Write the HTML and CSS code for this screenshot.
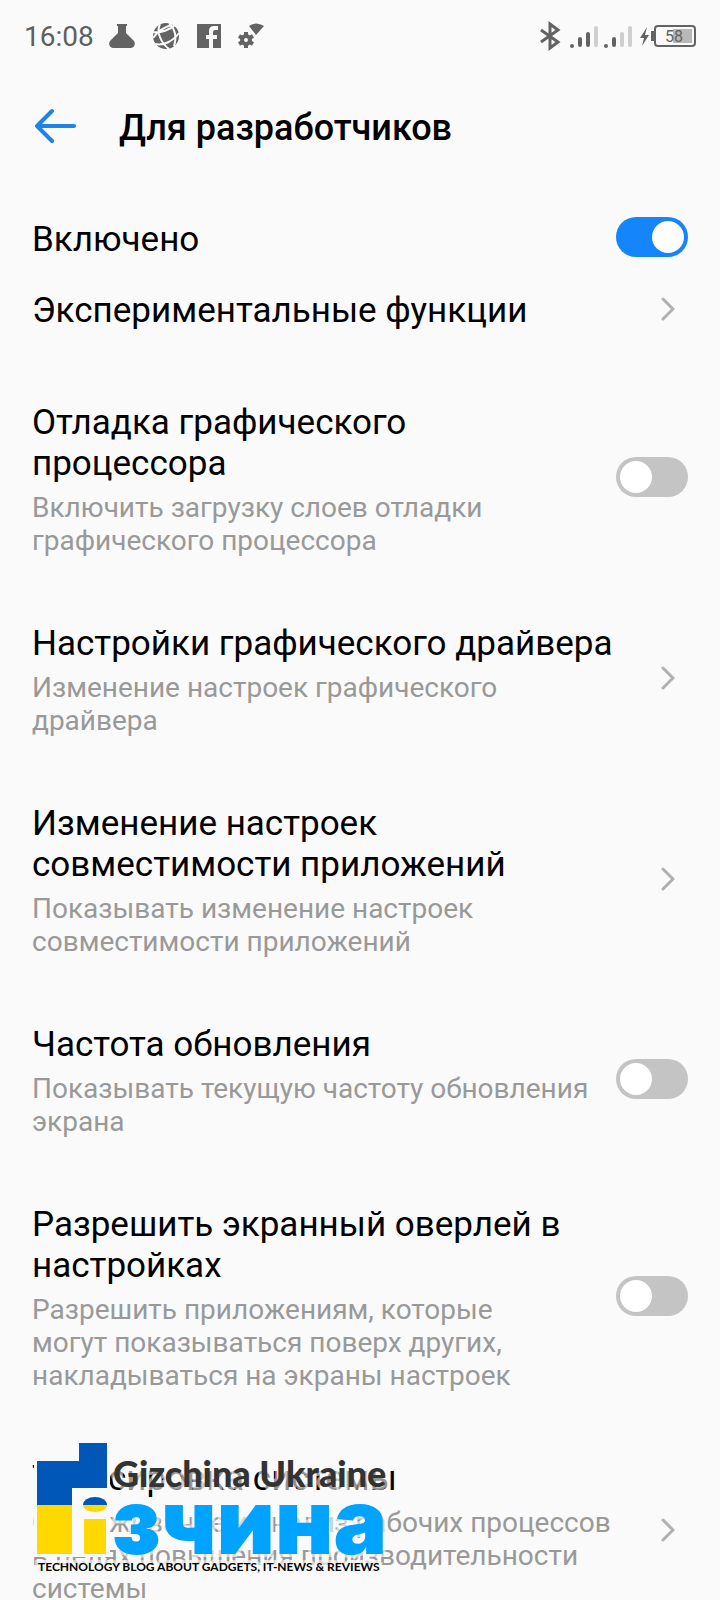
FILE: index.html
```
<!DOCTYPE html>
<html lang="ru">
<head>
  <meta charset="UTF-8">
  <meta name="viewport" content="width=device-width, initial-scale=1.0">
  <title>Для разработчиков</title>
  <link rel="stylesheet" href="styles.css">
</head>
<body>
  <div class="status-bar">
    <span class="clock">16:08</span>
    <div class="notifications">
      <svg class="icon" width="26" height="28" viewBox="0 0 26 28"><path d="M8 2h10v2h-1v7l8 8c2 3 0 7-3 7H4c-3 0-5-4-3-7l8-8V4H8z"/></svg>
      <svg class="icon" width="28" height="28" viewBox="0 0 28 28"><circle cx="14" cy="14" r="13"/><path class="cut" d="M1 10c8 1 17-2 22-7M3 22c9 2 18-3 24-11M8 2c-4 8 1 19 9 25M17 1c6 6 8 14 5 23M1 16C6 9 12 5 20 3"/></svg>
      <svg class="icon" width="24" height="28" viewBox="0 0 24 28"><path d="M0 2h24v24H16v-9h4v-4h-4v-3q0-2 2-2h3V4h-4q-5 0-5 5v4H9v4h3v9H0z"/></svg>
      <svg class="icon" width="26" height="28" viewBox="0 0 26 28"><path d="M11 4q7-5 15 0l-8 9z"/><path class="teeth" d="M8 10v16M1 14l14 8M1 22l14-8"/><circle class="gear" cx="8" cy="18" r="4"/></svg>
    </div>
    <div class="system">
      <svg class="icon" width="20" height="28" viewBox="0 0 20 28"><path class="line" d="M1 8l17 12-8 6V2l8 6L1 20"/></svg>
      <svg class="icon" width="64" height="28" viewBox="0 0 64 28"><path class="bar" d="M4 24v0M12 23v-6M20 23V12M38 24v0M46 23v-6"/><path class="bar weak" d="M28 23V6M54 23V12M62 23V6"/></svg>
      <svg class="icon" width="56" height="28" viewBox="0 0 56 28"><path d="M7 5L0 16h4l-2 8 7-11H5zM11 9h3v10h-3z"/><rect class="case" x="15" y="4" width="40" height="20" rx="3"/><rect class="charge" x="33" y="7" width="19" height="14"/><text class="percent" x="25" y="20">58</text></svg>
    </div>
  </div>

  <header class="header">
    <a class="back" href="#" aria-label="Назад">
      <svg width="42" height="36" viewBox="0 0 42 36"><path d="M17 3L2 18l15 15M2 18h37"/></svg>
    </a>
    <h1>Для разработчиков</h1>
  </header>

  <main class="settings">
    <label class="row row-main">
      <span class="text"><span class="title">Включено</span></span>
      <input class="switch" type="checkbox" checked>
    </label>
    <a class="row row-plain" href="#">
      <span class="text"><span class="title">Экспериментальные функции</span></span>
      <svg class="chevron" width="14" height="24" viewBox="0 0 14 24"><path d="M2 2l10 10L2 22"/></svg>
    </a>
    <label class="row">
      <span class="text">
        <span class="title">Отладка графического процессора</span>
        <span class="summary">Включить загрузку слоев отладки графического процессора</span>
      </span>
      <input class="switch" type="checkbox">
    </label>
    <a class="row" href="#">
      <span class="text">
        <span class="title">Настройки графического драйвера</span>
        <span class="summary">Изменение настроек графического драйвера</span>
      </span>
      <svg class="chevron" width="14" height="24" viewBox="0 0 14 24"><path d="M2 2l10 10L2 22"/></svg>
    </a>
    <a class="row" href="#">
      <span class="text">
        <span class="title">Изменение настроек совместимости приложений</span>
        <span class="summary">Показывать изменение настроек совместимости приложений</span>
      </span>
      <svg class="chevron" width="14" height="24" viewBox="0 0 14 24"><path d="M2 2l10 10L2 22"/></svg>
    </a>
    <label class="row">
      <span class="text">
        <span class="title">Частота обновления</span>
        <span class="summary">Показывать текущую частоту обновления экрана</span>
      </span>
      <input class="switch" type="checkbox">
    </label>
    <label class="row">
      <span class="text">
        <span class="title">Разрешить экранный оверлей в настройках</span>
        <span class="summary">Разрешить приложениям, которые<br>могут показываться поверх других,<br>накладываться на экраны настроек</span>
      </span>
      <input class="switch" type="checkbox">
    </label>
    <a class="row" href="#">
      <span class="text">
        <span class="title">Трассировка системы</span>
        <span class="summary">Отслеживание и анализ рабочих процессов<br>в целях повышения производительности<br>системы</span>
      </span>
      <svg class="chevron" width="14" height="24" viewBox="0 0 14 24"><path d="M2 2l10 10L2 22"/></svg>
    </a>
  </main>

  <div class="watermark">
    <svg width="356" height="132" viewBox="0 0 356 132">
      <path class="halo" d="M0 18h42V0h28v111H0z"/>
      <path class="blue" d="M0 18h42V0h28v45H35v17H0z"/>
      <path class="yellow" d="M0 62h35v49H0zM47 76h22v35H47z"/>
      <path class="blue" d="M46 62a12 8 0 0 1 24 0z"/>
      <path class="yellow" d="M46 62a12 7 0 0 0 24 0z"/>
      <text class="brand" x="76" y="44">Gizchina Ukraine</text>
      <text class="name" x="75" y="111">зчина</text>
      <text class="tagline" x="1" y="128">TECHNOLOGY BLOG ABOUT GADGETS, IT-NEWS &amp; REVIEWS</text>
    </svg>
  </div>
</body>
</html>
```
FILE: styles.css
```
html {
  height: 100%;
  overflow: hidden;
}
body {
  position: relative;
  height: 100%;
  margin: 0;
  overflow: hidden;
  background-color: #fafafa;
  color: #000;
  font-family: Roboto, sans-serif;
}
a {
  color: inherit;
  text-decoration: none;
}

/* Status bar */
.status-bar {
  display: flex;
  align-items: center;
  height: 72px;
  padding: 0 24px;
  color: #5f5f5f;
}
.clock {
  font-size: 28px;
}
.notifications {
  display: flex;
  gap: 17px;
  margin-left: 15px;
}
.system {
  display: flex;
  gap: 8px;
  margin-left: auto;
}
.icon {
  fill: #636363;
  overflow: visible;
}
.cut {
  fill: none;
  stroke: #fafafa;
  stroke-width: 2;
}
.teeth {
  stroke: #636363;
  stroke-width: 4;
}
.gear {
  fill: #fafafa;
  stroke: #636363;
  stroke-width: 4;
}
.line,
.case {
  fill: none;
  stroke: #636363;
  stroke-width: 2;
}
.line {
  stroke-width: 3;
}
.bar {
  fill: none;
  stroke: #636363;
  stroke-width: 4;
  stroke-linecap: round;
}
.weak {
  stroke: #cfcfcf;
}
.charge {
  fill: #b8b8b8;
}
.percent {
  font-size: 16px;
}

/* Header */
.header {
  display: flex;
  align-items: center;
  gap: 42px;
  height: 112px;
  padding: 0 35px;
}
.back {
  display: flex;
  margin-bottom: 4px;
}
.back path {
  fill: none;
  stroke: #1e82e6;
  stroke-width: 4;
  stroke-linecap: round;
  stroke-linejoin: round;
}
h1 {
  margin: 0;
  font-size: 36px;
  font-weight: 500;
}

/* Settings list */
.row {
  display: flex;
  align-items: center;
  gap: 16px;
  padding: 33px 32px;
}
.row-main {
  padding: 33px 32px 13px;
}
.row-plain {
  padding: 15px 32px 38px;
}
.text {
  flex: 1;
}
.title,
.summary {
  display: block;
}
.title {
  font-size: 35px;
  line-height: 41px;
}
.summary {
  margin-top: 7px;
  color: #999;
  font-size: 28px;
  line-height: 33px;
}
.switch {
  appearance: none;
  width: 72px;
  height: 40px;
  margin: 0 0 5px;
  padding: 4px;
  border-radius: 20px;
  background-color: #c4c4c4;
}
.switch::before {
  content: "";
  display: block;
  width: 32px;
  height: 32px;
  border-radius: 50%;
  background-color: #fff;
}
.switch:checked {
  background-color: #1485fa;
}
.switch:checked::before {
  margin-left: auto;
}
.chevron {
  margin: 0 13px 4px 16px;
}
.chevron path {
  fill: none;
  stroke: #b0b0b0;
  stroke-width: 3;
  stroke-linecap: round;
}

/* Site logo over the list */
.watermark {
  position: absolute;
  left: 37px;
  bottom: 25px;
}
.watermark svg {
  display: block;
  overflow: visible;
}
.halo {
  fill: #fafafa;
  stroke: #fafafa;
  stroke-width: 6;
}
.blue {
  fill: #0057b8;
}
.yellow {
  fill: #ffd900;
}
.brand,
.name,
.tagline {
  paint-order: stroke;
  stroke: rgba(250, 250, 250, 0.6);
  stroke-width: 6;
}
.brand {
  fill: #333;
  font-family: Lato, sans-serif;
  font-size: 36px;
  font-weight: 900;
}
.name {
  fill: #00a3ff;
  font-family: Inter, sans-serif;
  font-size: 90px;
  font-weight: 900;
}
.tagline {
  font-family: Lato, sans-serif;
  font-size: 12px;
  font-weight: 700;
}
```
